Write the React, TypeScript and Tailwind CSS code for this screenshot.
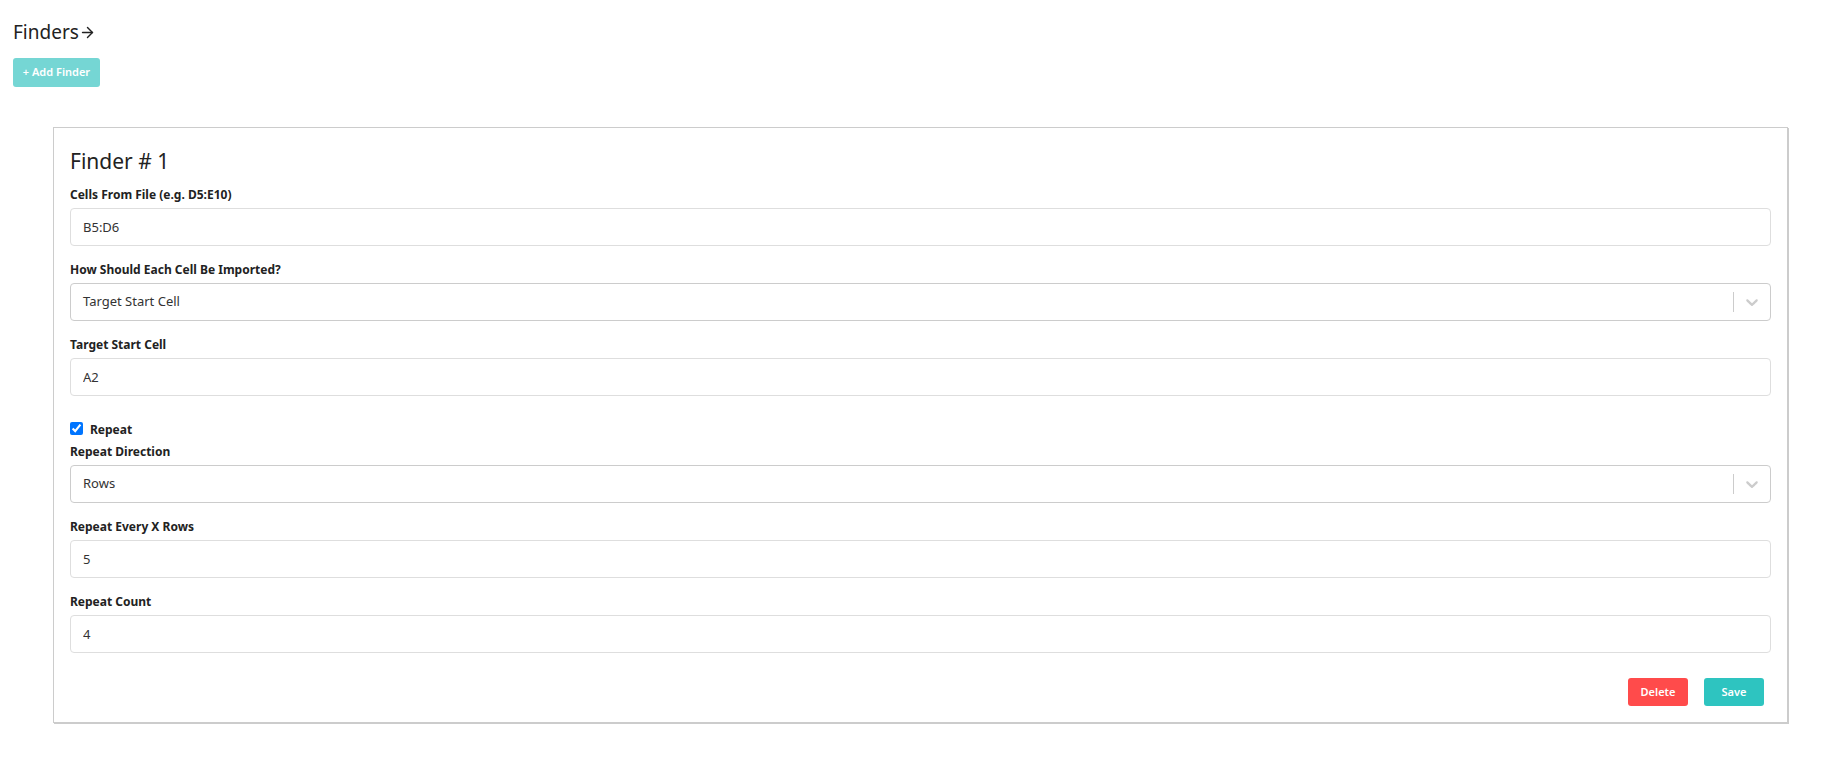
import type { ReactElement } from "react";

function Label({ children }: { children: string }): ReactElement {
  return <div className="mb-[4px] text-[12px] font-bold leading-[18px] text-[#222]">{children}</div>;
}

function TextField({ label, value }: { label: string; value: string }): ReactElement {
  return (
    <div className="mb-[15px]">
      <Label>{label}</Label>
      <input
        readOnly
        value={value}
        className="block h-[38px] w-full rounded-[4px] border border-[#dedede] bg-white px-[12px] text-[13px] text-[#333] outline-none"
      />
    </div>
  );
}

function SelectField({ label, value }: { label: string; value: string }): ReactElement {
  return (
    <div className="mb-[15px]">
      <Label>{label}</Label>
      <div className="flex h-[38px] w-full items-center rounded-[4px] border border-[#cccccc] bg-white">
        <div className="flex-1 px-[12px] text-[13px] text-[#333]">{value}</div>
        <div className="flex items-center">
          <span className="my-[8px] h-[20px] w-px bg-[#cccccc]" />
          <div className="p-[8px]">
            <svg width="20" height="20" viewBox="0 0 20 20" fill="#cccccc">
              <path d="M4.516 7.548c0.436-0.446 1.043-0.481 1.576 0l3.908 3.747 3.908-3.747c0.533-0.481 1.141-0.446 1.574 0 0.436 0.445 0.408 1.197 0 1.615-0.406 0.418-4.695 4.502-4.695 4.502-0.217 0.223-0.502 0.335-0.787 0.335s-0.57-0.112-0.789-0.335c0 0-4.287-4.084-4.695-4.502s-0.436-1.17 0-1.615z" />
            </svg>
          </div>
        </div>
      </div>
    </div>
  );
}

export default function App(): ReactElement {
  return (
    <div className="min-h-[760px] bg-white px-[13px] pt-[17px] font-['Noto_Sans',sans-serif] text-[#222]">
      <div className="flex items-center text-[19px] leading-[30px]">
        <span>Finders</span>
        <svg
          width="17"
          height="17"
          viewBox="0 0 24 24"
          fill="none"
          stroke="#222"
          strokeWidth="2"
          strokeLinecap="round"
          strokeLinejoin="round"
        >
          <path d="M5 12h14" />
          <path d="m12 5 7 7-7 7" />
        </svg>
      </div>

      <button className="mt-[11px] h-[29px] w-[87px] rounded-[3px] bg-[#75d6d4] text-[11px] font-semibold text-white">
        + Add Finder
      </button>

      <div className="ml-[40px] mr-[23px] mt-[40px] border border-[#cccccc] bg-white px-[16px] pb-[16px] pt-[20px] shadow-[1px_1px_0_#cccccc]">
        <div className="mb-[12px] text-[21px] leading-[26px] text-[#222]">Finder # 1</div>

        <TextField label="Cells From File (e.g. D5:E10)" value="B5:D6" />
        <SelectField label="How Should Each Cell Be Imported?" value="Target Start Cell" />
        <TextField label="Target Start Cell" value="A2" />

        <div className="mt-[25px] flex h-[18px] items-start">
          <input type="checkbox" defaultChecked className="m-0 mt-[1px] h-[13px] w-[13px]" />
          <span className="ml-[7px] text-[12px] font-bold leading-[18px] text-[#222]">Repeat</span>
        </div>
        <div className="mt-[4px]">
          <SelectField label="Repeat Direction" value="Rows" />
        </div>
        <TextField label="Repeat Every X Rows" value="5" />
        <TextField label="Repeat Count" value="4" />

        <div className="mt-[25px] flex justify-end gap-[16px] pr-[7px]">
          <button className="h-[28px] w-[60px] rounded-[3px] bg-[#ff4b4b] text-[11px] font-semibold text-white">
            Delete
          </button>
          <button className="h-[28px] w-[60px] rounded-[3px] bg-[#2ec4c0] text-[11px] font-semibold text-white">
            Save
          </button>
        </div>
      </div>
    </div>
  );
}
